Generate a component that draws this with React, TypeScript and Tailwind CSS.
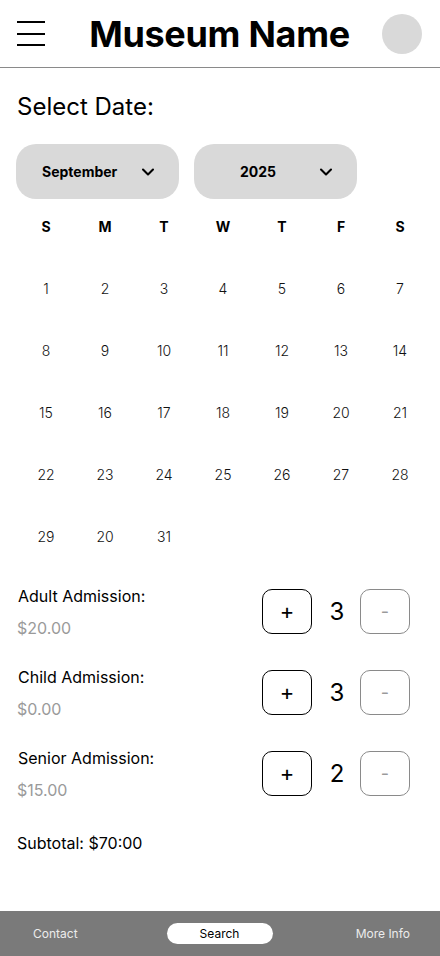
import { ChevronDown } from 'lucide-react';

const weeks = [
  [1, 2, 3, 4, 5, 6, 7],
  [8, 9, 10, 11, 12, 13, 14],
  [15, 16, 17, 18, 19, 20, 21],
  [22, 23, 24, 25, 26, 27, 28],
  [29, 20, 31],
];

const tickets = [
  { label: 'Adult Admission:', price: '$20.00', count: 3 },
  { label: 'Child Admission:', price: '$0.00', count: 3 },
  { label: 'Senior Admission:', price: '$15.00', count: 2 },
];

export default function App() {
  return (
    <div className="w-[440px] h-[956px] bg-white flex flex-col text-black" style={{ fontFamily: 'Inter, "Liberation Sans", sans-serif' }}>
      {/* header */}
      <header className="h-[68px] flex items-center justify-between pl-[17px] pr-[18px] border-b border-[#8a8a8a]">
        <div className="flex flex-col gap-[9.5px] w-[28px]">
          <span className="h-[2px] bg-black" />
          <span className="h-[2px] bg-black" />
          <span className="h-[2px] bg-black" />
        </div>
        <h1 className="text-[36px] font-bold tracking-[-0.3px] ml-[12px]">Museum Name</h1>
        <div className="w-[40px] h-[40px] rounded-full bg-[#d9d9d9]" />
      </header>

      <main className="flex-1 px-[17px]">
        <h2 className="text-[24px] mt-[24px] leading-[30px]">Select Date:</h2>

        <div className="flex gap-[15px] mt-[22px] -ml-[1px]">
          <button className="w-[163px] h-[55px] rounded-[20px] bg-[#d9d9d9] flex items-center pl-[26px] pr-[21px] justify-between text-[14px] font-bold">
            September
            <ChevronDown className="w-[20px] h-[20px]" strokeWidth={2.5} />
          </button>
          <button className="w-[163px] h-[55px] rounded-[20px] bg-[#d9d9d9] flex items-center pl-[46px] pr-[21px] justify-between text-[14px] font-bold">
            2025
            <ChevronDown className="w-[20px] h-[20px]" strokeWidth={2.5} />
          </button>
        </div>

        {/* calendar */}
        <div className="w-[413px] -ml-[0.5px] mt-[17px]">
          <div className="grid grid-cols-7 h-[20px] items-center text-[14px] font-bold text-center">
            {['S', 'M', 'T', 'W', 'T', 'F', 'S'].map((d, i) => (
              <span key={i}>{d}</span>
            ))}
          </div>
          <div className="mt-[42px] flex flex-col gap-[42px]">
            {weeks.map((w, i) => (
              <div key={i} className="grid grid-cols-7 h-[20px] items-center text-[14px] font-light text-center text-[#111]">
                {w.map((d, j) => (
                  <span key={j}>{d}</span>
                ))}
              </div>
            ))}
          </div>
        </div>

        {/* admissions */}
        <div className="mt-[43px] flex flex-col gap-[36px]">
          {tickets.map((t) => (
            <div key={t.label} className="flex items-start justify-between h-[45px] pr-[13px]">
              <div className="flex flex-col -mt-[3px] leading-[20px] text-[16px]">
                <span className="ml-[1px]">{t.label}</span>
                <span className="text-[#9a9a9a] mt-[12px]">{t.price}</span>
              </div>
              <div className="flex items-center">
                <button className="w-[50px] h-[45px] rounded-[10px] border border-black flex items-center justify-center text-[22px]">+</button>
                <span className="w-[48px] text-center text-[24px] pl-[2px]">{t.count}</span>
                <button className="w-[50px] h-[45px] rounded-[10px] border border-[#8a8a8a] flex items-center justify-center text-[18px] text-[#9a9a9a]">-</button>
              </div>
            </div>
          ))}
        </div>

        <p className="text-[16px] mt-[35px]">Subtotal: $70:00</p>
      </main>

      {/* bottom nav */}
      <nav className="h-[45px] bg-[#7a7a7a] flex items-center justify-between pl-[33px] pr-[30px] text-[12px]">
        <span className="text-[#ececec] w-[78px] pt-[1px]">Contact</span>
        <span className="bg-white text-black rounded-full w-[106px] h-[21px] flex items-center justify-center pt-[1px]">Search</span>
        <span className="text-[#ececec] w-[82px] text-right pt-[1px]">More Info</span>
      </nav>
    </div>
  );
}
